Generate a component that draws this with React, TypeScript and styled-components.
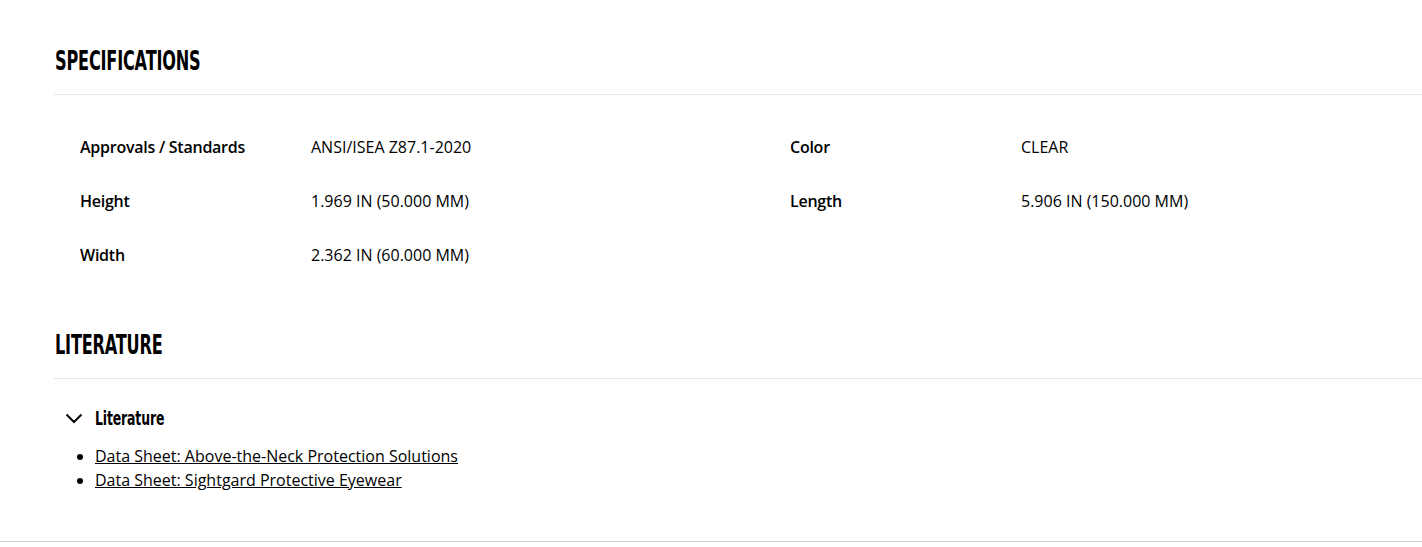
import * as React from 'react'
import styled, { createGlobalStyle } from 'styled-components'

const GlobalStyle = createGlobalStyle`
  body {
    margin: 0;
    background: #fff;
    color: #000;
    font-family: 'Open Sans', 'Liberation Sans', sans-serif;
  }
`

const Page = styled.div`
  border-bottom: 1px solid #cfcfcf;
  padding-bottom: 49px;
`

const Section = styled.section`
  padding-left: 54px;
`

const SectionTitle = styled.h2<{ $top: number }>`
  margin: 0;
  padding: ${(p) => p.$top}px 0 18px 1px;
  font-family: 'DejaVu Sans', 'Liberation Sans', sans-serif;
  font-weight: 700;
  font-size: 26px;
  line-height: 30px;
  letter-spacing: -0.3px;
  text-transform: uppercase;
  border-bottom: 1px solid #e6e6e6;
`

// the heading face in the reference is a condensed grotesque; squeeze the bold sans
const Condensed = styled.span<{ $ratio: number }>`
  display: inline-block;
  transform: scaleX(${(p) => p.$ratio});
  transform-origin: left center;
`

const SpecGrid = styled.div`
  display: grid;
  grid-template-columns: 231px 479px 231px 1fr;
  grid-auto-rows: 54px;
  margin-top: 25px;
  padding-left: 26px;
  font-size: 16px;
  line-height: 54px;
`

const SpecLabel = styled.div`
  font-weight: 600;
  letter-spacing: -0.25px;
`

const SpecValue = styled.div`
  font-weight: 400;
`

const Accordion = styled.div`
  margin-top: 27px;
`

const AccordionHeader = styled.button`
  display: flex;
  align-items: center;
  gap: 12px;
  padding: 0 0 0 11px;
  border: 0;
  background: none;
  height: 24px;
  cursor: pointer;
  font-family: 'DejaVu Sans', 'Liberation Sans', sans-serif;
  font-weight: 700;
  font-size: 19px;
  letter-spacing: -0.2px;
  color: #000;
`

const DocList = styled.ul`
  margin: 14px 0 0;
  padding-left: 41px;
  font-size: 16px;
  line-height: 24px;
`

const DocLink = styled.a`
  color: #000;
  text-decoration: underline;
`

const Chevron = () => (
  <svg width="18" height="11" viewBox="0 0 18 11" fill="none">
    <polyline points="1.5,1.5 9,9 16.5,1.5" stroke="#000" strokeWidth="2" />
  </svg>
)

const specs: [string, string, string?, string?][] = [
  ['Approvals / Standards', 'ANSI/ISEA Z87.1-2020', 'Color', 'CLEAR'],
  ['Height', '1.969 IN (50.000 MM)', 'Length', '5.906 IN (150.000 MM)'],
  ['Width', '2.362 IN (60.000 MM)'],
]

const docs = [
  'Data Sheet: Above-the-Neck Protection Solutions',
  'Data Sheet: Sightgard Protective Eyewear',
]

export default function App() {
  return (
    <Page>
      <GlobalStyle />
      <Section>
        <SectionTitle $top={46}>
          <Condensed $ratio={0.62}>Specifications</Condensed>
        </SectionTitle>
        <SpecGrid>
          {specs.map(([l1, v1, l2, v2]) => (
            <React.Fragment key={l1}>
              <SpecLabel>{l1}</SpecLabel>
              <SpecValue>{v1}</SpecValue>
              <SpecLabel>{l2}</SpecLabel>
              <SpecValue>{v2}</SpecValue>
            </React.Fragment>
          ))}
        </SpecGrid>
      </Section>
      <Section>
        <SectionTitle $top={48}>
          <Condensed $ratio={0.62}>Literature</Condensed>
        </SectionTitle>
        <Accordion>
          <AccordionHeader>
            <Chevron />
            <Condensed $ratio={0.655}>Literature</Condensed>
          </AccordionHeader>
          <DocList>
            {docs.map((d) => (
              <li key={d}>
                <DocLink href="#">{d}</DocLink>
              </li>
            ))}
          </DocList>
        </Accordion>
      </Section>
    </Page>
  )
}
